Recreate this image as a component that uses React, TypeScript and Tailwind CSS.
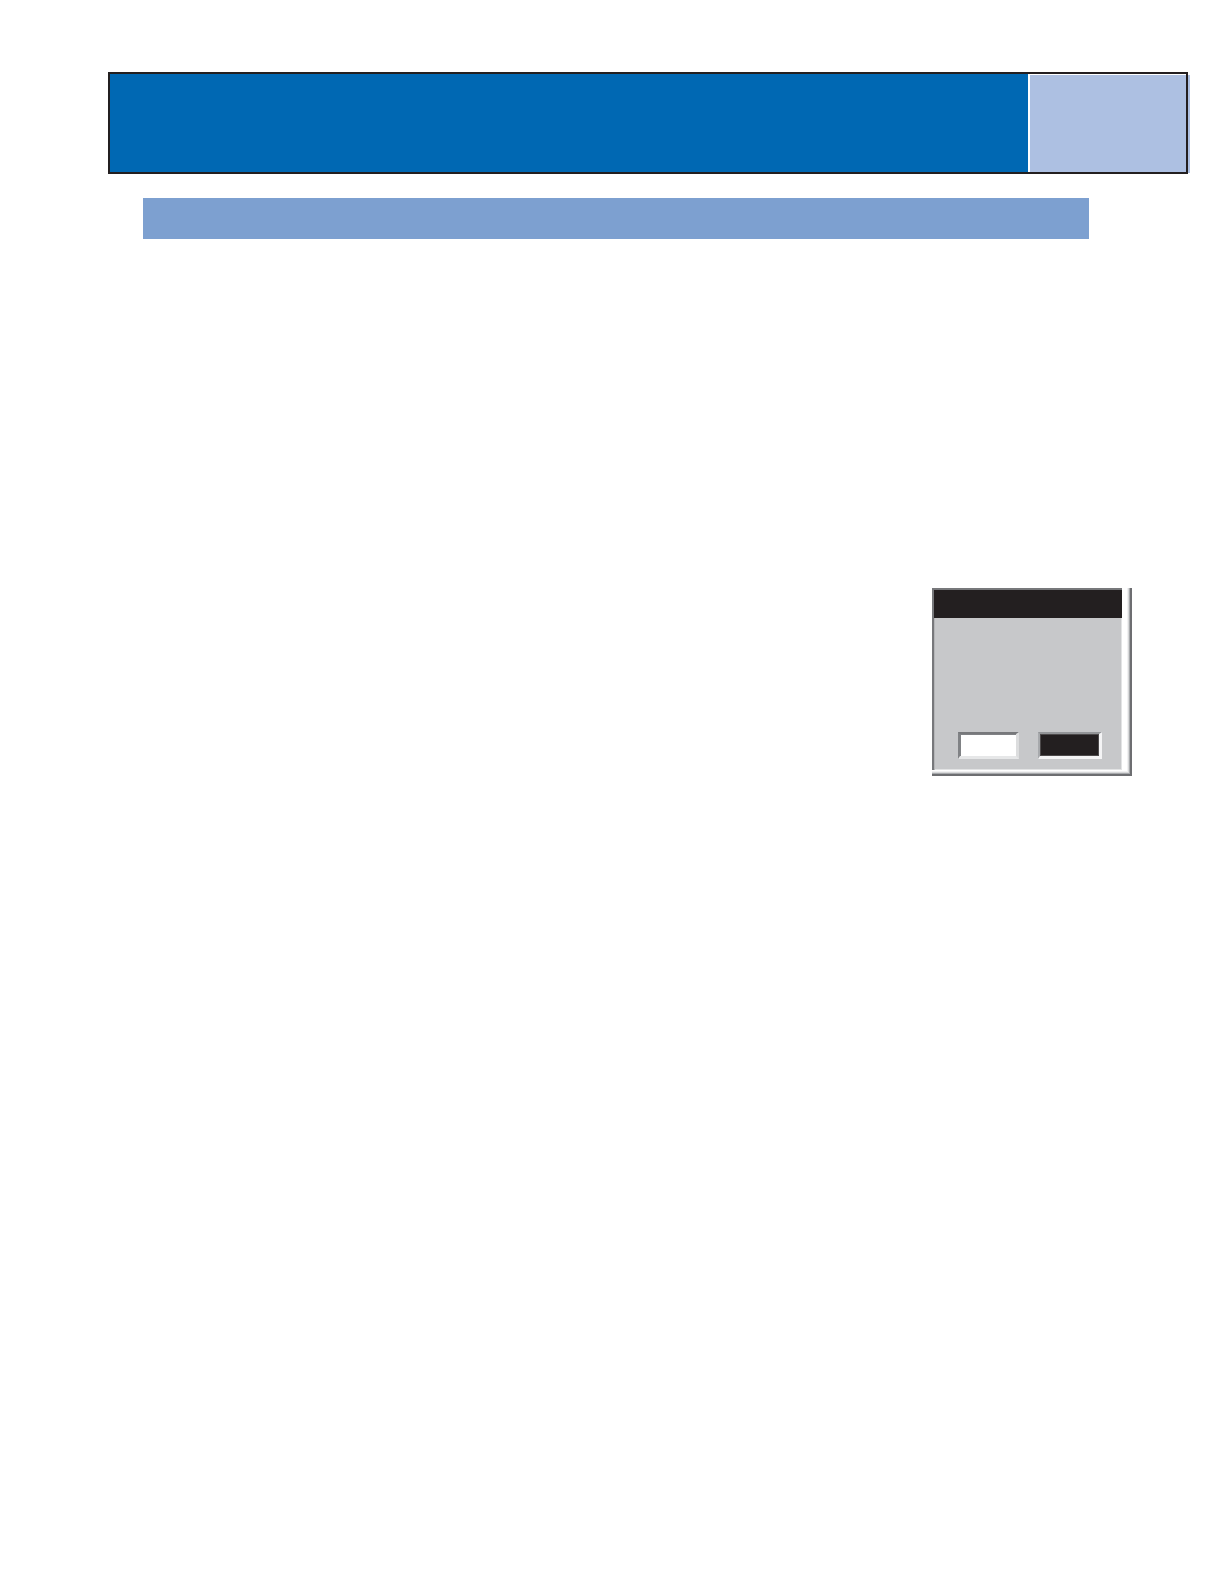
import React, { useState } from "react";

const fieldBase =
  "block h-[27px] rounded-none px-1 text-center text-sm outline-none";

const Header: React.FC = () => {
  return (
    <header className="ml-[108px] mr-9 flex h-[102px] border-2 border-[#231f20] bg-[#0068b3] shadow-[4px_1px_0_-2px_#adc0e2]">
      <div className="flex-1" />
      <div className="w-[158px] border-l-2 border-t border-white bg-[#adc0e2]" />
    </header>
  );
};

const ValuePanel: React.FC = () => {
  const [current, setCurrent] = useState("");
  const [selected, setSelected] = useState("");

  return (
    // raised frame: grey edge, white bevel, sunken grey face
    <section className="ml-auto mr-[92px] mt-[349px] h-[188px] w-[200px] border-b-2 border-r-2 border-[#6d6e71] bg-white pb-1 pr-2 shadow-[inset_-1px_-1px_0_#a7a9ac,inset_-2px_-2px_0_#d8d9da,inset_-3px_-3px_0_#f1f1f2]">
      <div className="flex h-full flex-col border-l-2 border-t-2 border-[#77787b] bg-[#c7c8ca]">
        <div className="h-7 bg-[#231f20]" />
        <div className="flex flex-1 items-end justify-between pb-[11px] pl-6 pr-5 shadow-[inset_1px_0_0_#b5b6b8,inset_-1px_-1px_0_#e2e3e4]">
          <input
            type="text"
            aria-label="Current value"
            value={current}
            onChange={(e) => setCurrent(e.target.value)}
            className={`${fieldBase} w-[61px] border-b-[3px] border-l-2 border-r-[3px] border-t-2 border-b-[#e6e7e8] border-l-[#808285] border-r-[#dcddde] border-t-[#77787b] bg-white text-[#231f20] shadow-[inset_1px_1px_0_#808285]`}
          />
          <input
            type="text"
            aria-label="Selected value"
            value={selected}
            onChange={(e) => setSelected(e.target.value)}
            className={`${fieldBase} w-16 border-b-[3px] border-l-2 border-r-[3px] border-t-2 border-b-[#f4f4f5] border-l-[#a7a9ac] border-r-[#f4f4f5] border-t-[#939598] bg-[#231f20] text-white shadow-[inset_0_0_0_1px_#4d4a4b]`}
          />
        </div>
      </div>
    </section>
  );
};

const App: React.FC = () => {
  return (
    <main className="min-h-screen bg-white pt-[72px] font-['Liberation_Sans',sans-serif]">
      <Header />
      {/* section title bar */}
      <div className="ml-[143px] mr-[135px] mt-6 h-[41px] bg-[#7da0d0]" />
      <ValuePanel />
    </main>
  );
};

export default App;
